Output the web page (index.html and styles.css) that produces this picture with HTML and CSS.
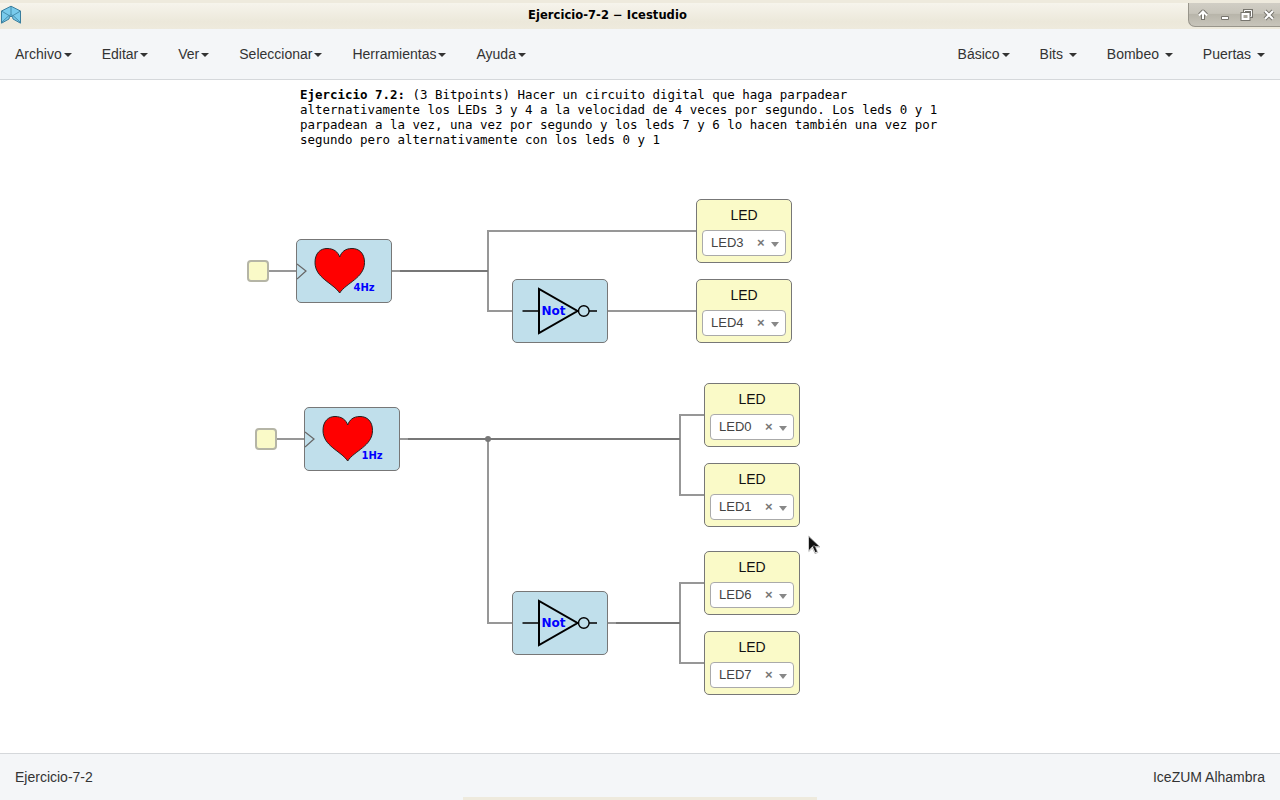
FILE: index.html
```html
<!DOCTYPE html>
<html lang="es">
<head>
<meta charset="utf-8">
<title>Ejercicio-7-2 − Icestudio</title>
<link rel="stylesheet" href="styles.css">
</head>
<body>
<div class="window">
  <header class="titlebar">
    <svg class="app-icon" width="22" height="20" viewBox="0 0 22 20"><path d="M1.5 6 11 1.200 20.500 6V18.200L13 14 12.500 11.500H9.500L9 14 1.500 18.200Z" fill="#79cbec" stroke="#397d9d"/><path d="M1.500 6 9 10.500 11 10 13 10.500 20.500 6M11 1V10M9 10.500 1.500 17.500M13 10.500 20.500 17.500" fill="none" stroke="#397d9d" stroke-width=".8"/></svg>
    <h1 class="window-title">Ejercicio-7-2 − Icestudio</h1>
    <div class="window-controls">
      <svg width="92" height="24" viewBox="0 0 92 24">
        <g fill="none" stroke="#77756e" stroke-width="4" stroke-linejoin="round"><path d="M15 17V9M11.500 12 15 8.500 18.500 12"/><path d="M77 8 85 16M85 8 77 16"/></g>
        <g fill="none" stroke="#fff" stroke-width="2"><path d="M15 16V9M11 12.500 15 8.500 19 12.500"/><path d="M77 8 85 16M85 8 77 16"/></g>
        <path d="M33.500 13.500H40.500V16.500H33.500Z" fill="#fff" stroke="#77756e"/>
        <path d="M56.500 7.500H63.500V13.500H56.500Z" fill="none" stroke="#77756e" stroke-width="3"/><path d="M56.500 7.500H63.500V13.500H56.500Z" fill="none" stroke="#fff"/>
        <path d="M54.500 11H60.500V16H54.500Z" fill="#bbb8ae" stroke="#77756e" stroke-width="4"/><path d="M54.500 11H60.500V16H54.500Z" fill="#aaa79d" stroke="#fff" stroke-width="2"/>
      </svg>
    </div>
  </header>
  <nav class="menubar">
    <ul class="menu">
      <li>Archivo<i class="caret"></i></li><li>Editar<i class="caret"></i></li><li>Ver<i class="caret"></i></li><li>Seleccionar<i class="caret"></i></li><li>Herramientas<i class="caret"></i></li><li>Ayuda<i class="caret"></i></li>
    </ul>
    <ul class="menu">
      <li>Básico<i class="caret"></i></li><li>Bits <i class="caret"></i></li><li>Bombeo <i class="caret"></i></li><li>Puertas <i class="caret"></i></li>
    </ul>
  </nav>
  <main class="canvas">
    <p class="note"><b>Ejercicio 7.2:</b> (3 Bitpoints) Hacer un circuito digital que haga parpadear<br>alternativamente los LEDs 3 y 4 a la velocidad de 4 veces por segundo. Los leds 0 y 1<br>parpadean a la vez, una vez por segundo y los leds 7 y 6 lo hacen también una vez por<br>segundo pero alternativamente con los leds 0 y 1</p>
    <svg class="wires" width="1280" height="673" viewBox="0 80 1280 673">
      <g fill="none" stroke="#979797" stroke-width="2">
        <path d="M268 271H296M392 271H488M512 311H488V231H696M608 311H696"/>
        <path d="M276 439H304M400 439H680M704 415H680V495H704M488 439V623H512M608 623H680M704 583H680V663H704"/>
      </g>
      <path d="M400 271H488M408 439H680M616 623H680" stroke="#777" stroke-width="2"/>
      <circle cx="488" cy="439" r="3" fill="#777"/>
    </svg>
    <div class="port p1"></div>
    <div class="port p2"></div>
    <div class="block heart h1"><svg width="94" height="62" viewBox="1 1 94 62"><path d="M1 25 10 32 1 40" fill="none" stroke="#666" stroke-width="1.200"/><path d="M43.700 54C37 44 19 39 19 23.500 19 14 24.500 9.500 31 9.500 38 9.500 42 13 43.700 18 45.500 13 49 9.500 56 9.500 63 9.500 68.500 14 68.500 23.500 68.500 39 50 44 43.700 54Z" fill="#f00" stroke="#222"/><text class="freq" x="57.500" y="52">4Hz</text></svg></div>
    <div class="block heart h2"><svg width="94" height="62" viewBox="1 1 94 62"><path d="M1 25 10 32 1 40" fill="none" stroke="#666" stroke-width="1.200"/><path d="M43.700 54C37 44 19 39 19 23.500 19 14 24.500 9.500 31 9.500 38 9.500 42 13 43.700 18 45.500 13 49 9.500 56 9.500 63 9.500 68.500 14 68.500 23.500 68.500 39 50 44 43.700 54Z" fill="#f00" stroke="#222"/><text class="freq" x="57.500" y="52">1Hz</text></svg></div>
    <div class="block n1"><svg width="94" height="62" viewBox="1 1 94 62"><g fill="none" stroke="#000"><path d="M10.500 32H27M77 32H85" stroke-width="1.300"/><path d="M27 10V54L65.500 32Z" stroke-width="2"/><circle cx="71.800" cy="32" r="5.300" stroke-width="1.400"/></g><text class="gate" x="29.500" y="36">Not</text></svg></div>
    <div class="block n2"><svg width="94" height="62" viewBox="1 1 94 62"><g fill="none" stroke="#000"><path d="M10.500 32H27M77 32H85" stroke-width="1.300"/><path d="M27 10V54L65.500 32Z" stroke-width="2"/><circle cx="71.800" cy="32" r="5.300" stroke-width="1.400"/></g><text class="gate" x="29.500" y="36">Not</text></svg></div>
    <div class="block led l3"><span>LED</span><div class="select"><span>LED3</span><b>×</b><i></i></div></div>
    <div class="block led l4"><span>LED</span><div class="select"><span>LED4</span><b>×</b><i></i></div></div>
    <div class="block led l0"><span>LED</span><div class="select"><span>LED0</span><b>×</b><i></i></div></div>
    <div class="block led l1"><span>LED</span><div class="select"><span>LED1</span><b>×</b><i></i></div></div>
    <div class="block led l6"><span>LED</span><div class="select"><span>LED6</span><b>×</b><i></i></div></div>
    <div class="block led l7"><span>LED</span><div class="select"><span>LED7</span><b>×</b><i></i></div></div>
    <svg class="pointer" width="14" height="20" viewBox="0 0 14 20"><path d="M.8 1V16.500L4.500 13 7 18.700 9.800 17.500 7.300 12H12Z" fill="#fff" stroke="#aaa" stroke-width=".8"/><path d="M1 2V15L4.700 11.300H6L11 11.300ZM4.500 11 6.500 10.500 9 16.500 7.500 17.500Z" fill="#111"/></svg>
  </main>
  <footer class="statusbar"><span>Ejercicio-7-2</span><span>IceZUM Alhambra</span><div class="panel-edge"></div></footer>
</div>
</body>
</html>
```
FILE: styles.css
```css
* { box-sizing: border-box; }
body { margin: 0; font: 14px/20px "Liberation Sans", Arial, sans-serif; color: #333; }
.window { display: flex; flex-direction: column; width: 1280px; height: 800px; overflow: hidden; background: #fff; }
.titlebar { display: grid; grid-template-columns: 528px 1fr 92px; height: 29px; padding-top: 3px; background: linear-gradient(#eeeadd 3px, #f6f4ec 3px, #ece8da 22px, #eeeadd); }
.app-icon { display: block; margin-top: 2px; }
.window-title { margin: 0; color: #000; font: bold 11.500px/24px "DejaVu Sans", sans-serif; white-space: nowrap; letter-spacing: .06px; }
.window-controls { height: 24px; border: 1px solid #98958b; border-width: 0 0 1px 1px; border-bottom-left-radius: 7px; background: linear-gradient(#d1cec5, #c7c4ba 45%, #b8b5aa 50%, #c8c5bb); }
.window-controls svg { display: block; margin-left: -1px; }
.menubar { display: flex; justify-content: space-between; height: 51px; background: #f4f6f8; border-bottom: 1px solid #d5d8db; }
.menu { display: flex; margin: 0; padding: 0; list-style: none; }
.menu li { padding: 15px; white-space: pre; }
.caret { display: inline-block; margin-left: 2px; vertical-align: middle; border: 4px solid transparent; border-top-color: #333; border-bottom: 0; }
.canvas { position: relative; flex: 1; background: #fff; }
.note { margin: 0; padding: 7px 0 0 300px; color: #000; font: 12.460px/15px "DejaVu Sans Mono", monospace; white-space: nowrap; }
.wires { position: absolute; left: 0; top: 0; }
.port { position: absolute; width: 22px; height: 22px; border: 2px solid #b5b5a6; border-radius: 4px; background: #fafac8; }
.p1 { left: 247px; top: 180px; }
.p2 { left: 255px; top: 348px; }
.block { position: absolute; width: 96px; height: 64px; border: 1px solid #777; border-radius: 5px; background: #c0dfeb; }
.block > svg { display: block; }
.h1 { left: 296px; top: 159px; }
.h2 { left: 304px; top: 327px; }
.n1 { left: 512px; top: 199px; }
.n2 { left: 512px; top: 511px; }
.freq, .gate { fill: #00f; font: bold 10px "DejaVu Sans", sans-serif; }
.gate { font-size: 12px; }
.led { display: flex; flex-direction: column; align-items: center; padding-top: 5px; background: #fafac8; color: #111; }
.l3 { left: 696px; top: 119px; }
.l4 { left: 696px; top: 199px; }
.l0 { left: 704px; top: 303px; }
.l1 { left: 704px; top: 383px; }
.l6 { left: 704px; top: 471px; }
.l7 { left: 704px; top: 551px; }
.select { display: flex; align-items: center; width: 84px; height: 26px; margin-top: 5px; padding-left: 8px; border: 1px solid #aaa; border-radius: 4px; background: #fff; color: #444; font-size: 13px; }
.select span { width: 46px; }
.select b { width: 14px; color: #777; font-size: 13px; line-height: 20px; }
.select i { margin-top: 3px; border: 4px solid transparent; border-top: 5px solid #888; border-bottom: 0; }
.pointer { position: absolute; left: 808px; top: 455px; }
.statusbar { position: relative; display: flex; justify-content: space-between; height: 47px; padding: 13px 15px; background: #f4f6f8; border-top: 1px solid #d5d8db; }
.panel-edge { position: absolute; left: 463px; bottom: 0; width: 354px; height: 3px; background: #eeeadd; }
```
